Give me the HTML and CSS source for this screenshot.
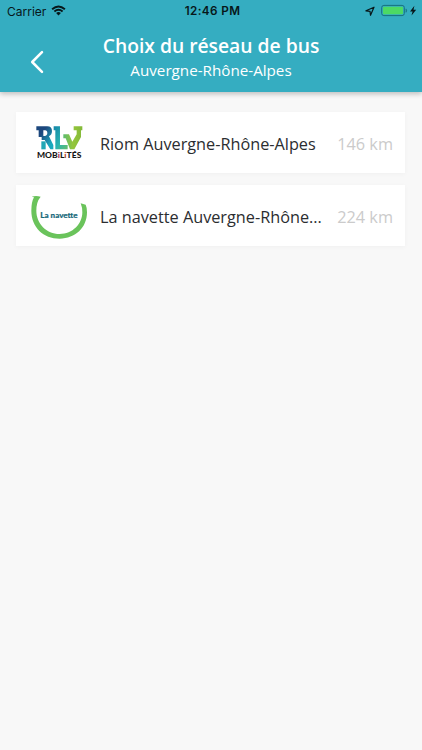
FILE: index.html
```html
<!DOCTYPE html>
<html lang="fr">
<head>
<meta charset="utf-8">
<title>Choix du réseau de bus</title>
<link rel="stylesheet" href="styles.css">
</head>
<body>
<header class="header">
  <div class="status">
    <div class="carrier">
      <span>Carrier</span>
      <svg class="wifi" width="15" height="11" viewBox="0 0 15 11">
        <path d="M1.1 4.2Q7.5 -1.4 13.9 4.2M3.4 6.5Q7.5 3 11.6 6.5" fill="none" stroke="#07171a" stroke-width="1.9"/>
        <path d="M5.1 8Q7.5 6.2 9.9 8L7.5 10.5Z" fill="#07171a"/>
      </svg>
    </div>
    <span class="clock">12:46 PM</span>
    <svg class="indicators" width="54" height="14" viewBox="0 0 54 14">
      <path d="M1.9 6.8L10 3.2L6.5 11.3L6 7.3Z" fill="none" stroke="#07171a" stroke-width="1.2" stroke-linejoin="round"/>
      <rect x="17.7" y="1.4" width="22.6" height="10.2" rx="2.2" fill="none" stroke="#17717f" stroke-width="1"/>
      <rect x="19" y="2.7" width="20" height="7.6" rx="1" fill="#4cd964"/>
      <path d="M42 4.9Q43.2 6.5 42 8.3Z" fill="#17717f" stroke="#17717f" stroke-width=".6"/>
      <path d="M50.4 1.7L46 7.4H48.6L47.5 11.6L52.2 5.7H49.5Z" fill="#07171a"/>
    </svg>
  </div>
  <div class="navbar">
    <svg class="back" width="14" height="24" viewBox="0 0 14 24">
      <path d="M12 2.2L2.2 12L12 21.8" fill="none" stroke="#fff" stroke-width="2.5" stroke-linecap="round" stroke-linejoin="round"/>
    </svg>
    <div class="titles">
      <h1 class="title">Choix du réseau de bus</h1>
      <p class="subtitle">Auvergne-Rhône-Alpes</p>
    </div>
  </div>
</header>
<main class="list">
  <article class="card">
    <svg class="logo" width="80" height="60" viewBox="0 0 240 180">
      <defs>
        <linearGradient id="blue" x1="0" y1="0" x2="1" y2="1"><stop offset=".3" stop-color="#1c477d"/><stop offset=".8" stop-color="#19a9bd"/></linearGradient>
        <linearGradient id="mid" x1="0" y1="0" x2="1" y2="1"><stop offset="0" stop-color="#1585a8"/><stop offset=".55" stop-color="#28b4b2"/><stop offset="1" stop-color="#68bd69"/></linearGradient>
        <linearGradient id="green" x1="0" y1="0" x2="1" y2="0"><stop offset="0" stop-color="#5cbb71"/><stop offset=".5" stop-color="#95c63b"/><stop offset="1" stop-color="#83b93a"/></linearGradient>
      </defs>
      <path d="M49 34H82Q96 34 96 48Q96 59 87 64L100 90V103H91L74 75H65V63H74Q82 62 82 54Q82 46 75 46H70V66H56V46H49Z" fill="url(#blue)"/>
      <path d="M64 79H77V103H64Z" fill="#20a7b5"/>
      <path d="M101 34H120V90H143V103H106V46H101Z" fill="url(#mid)"/>
      <path d="M130 58H147L157 80L170 58V46H161V34H187V46H183V66L163 103H150L137 70H130Z" fill="url(#green)"/>
      <text x="51" y="129" class="brand" textLength="133" lengthAdjust="spacingAndGlyphs">MOB<tspan fill="#a82a49">i</tspan>L<tspan fill="#b5432b">i</tspan>TÉS</text>
    </svg>
    <span class="name">Riom Auvergne-Rhône-Alpes</span>
    <span class="distance">146 km</span>
  </article>
  <article class="card">
    <svg class="logo" width="80" height="60" viewBox="0 0 240 180">
      <path d="M35 26Q48 22 62 26Q49 41 49 68C49 106 79 138 119 138C158 138 187 108 187 73Q187 58 182 46L197 50Q201 58 201 73C201 119 166 152 119 152C70 152 34 117 34 68Q34 42 42 28Z" fill="#6ac35b"/>
      <text x="61" y="90" class="navette" textLength="112" lengthAdjust="spacingAndGlyphs">La navette</text>
    </svg>
    <span class="name">La navette Auvergne-Rhône...</span>
    <span class="distance">224 km</span>
  </article>
</main>
</body>
</html>
```
FILE: styles.css
```css
* {
  box-sizing: border-box;
}

body {
  margin: 0;
  min-height: 750px;
  background: #f8f8f8;
  font-family: "Open Sans", "Noto Sans", sans-serif;
}

.header {
  height: 92px;
  background: #35adc1;
  box-shadow: 0 2px 5px rgba(0, 0, 0, 0.24);
}

.status {
  display: grid;
  grid-template-columns: 1fr auto 1fr;
  align-items: center;
  height: 22px;
  padding: 0 4px 0 7px;
  color: #07171a;
  font-family: Inter, sans-serif;
  font-size: 12px;
}

.carrier {
  display: flex;
  align-items: center;
  gap: 5px;
}

.wifi {
  margin-top: -2px;
}

.clock {
  font-size: 11.7px;
  font-weight: 600;
  letter-spacing: 0.4px;
}

.indicators {
  justify-self: end;
}

.navbar {
  display: grid;
  grid-template-columns: 30px 1fr 30px;
  height: 70px;
}

.back {
  margin: 28px 0 0 30px;
}

.titles {
  color: #fff;
  text-align: center;
}

.title {
  margin: 11px 0 0;
  font-size: 19.3px;
  font-weight: 600;
  line-height: 26px;
}

.subtitle {
  margin: 0;
  font-size: 15.2px;
  line-height: 22px;
}

.list {
  display: grid;
  gap: 12px;
  padding: 20.4px 17px 0 16.4px;
}

.card {
  display: flex;
  align-items: center;
  height: 61px;
  padding: 0 12px 0 3.6px;
  background: #fff;
  box-shadow: 0 1px 5px rgba(0, 0, 0, 0.035);
}

.logo {
  flex: none;
  margin-top: 5px;
}

.name {
  padding-top: 3px;
  color: #2b2d30;
  font-size: 16.25px;
  line-height: 26px;
  white-space: nowrap;
}

.distance {
  margin-left: auto;
  padding-top: 2px;
  color: #cbcbcb;
  font-size: 16.3px;
  white-space: nowrap;
}

.brand {
  fill: #171717;
  font-family: Lato, sans-serif;
  font-size: 24px;
  font-weight: 900;
}

.navette {
  fill: #17697a;
  stroke: #17697a;
  stroke-width: 0.5px;
  font-family: Lato, sans-serif;
  font-size: 24px;
  font-weight: 900;
}
```
